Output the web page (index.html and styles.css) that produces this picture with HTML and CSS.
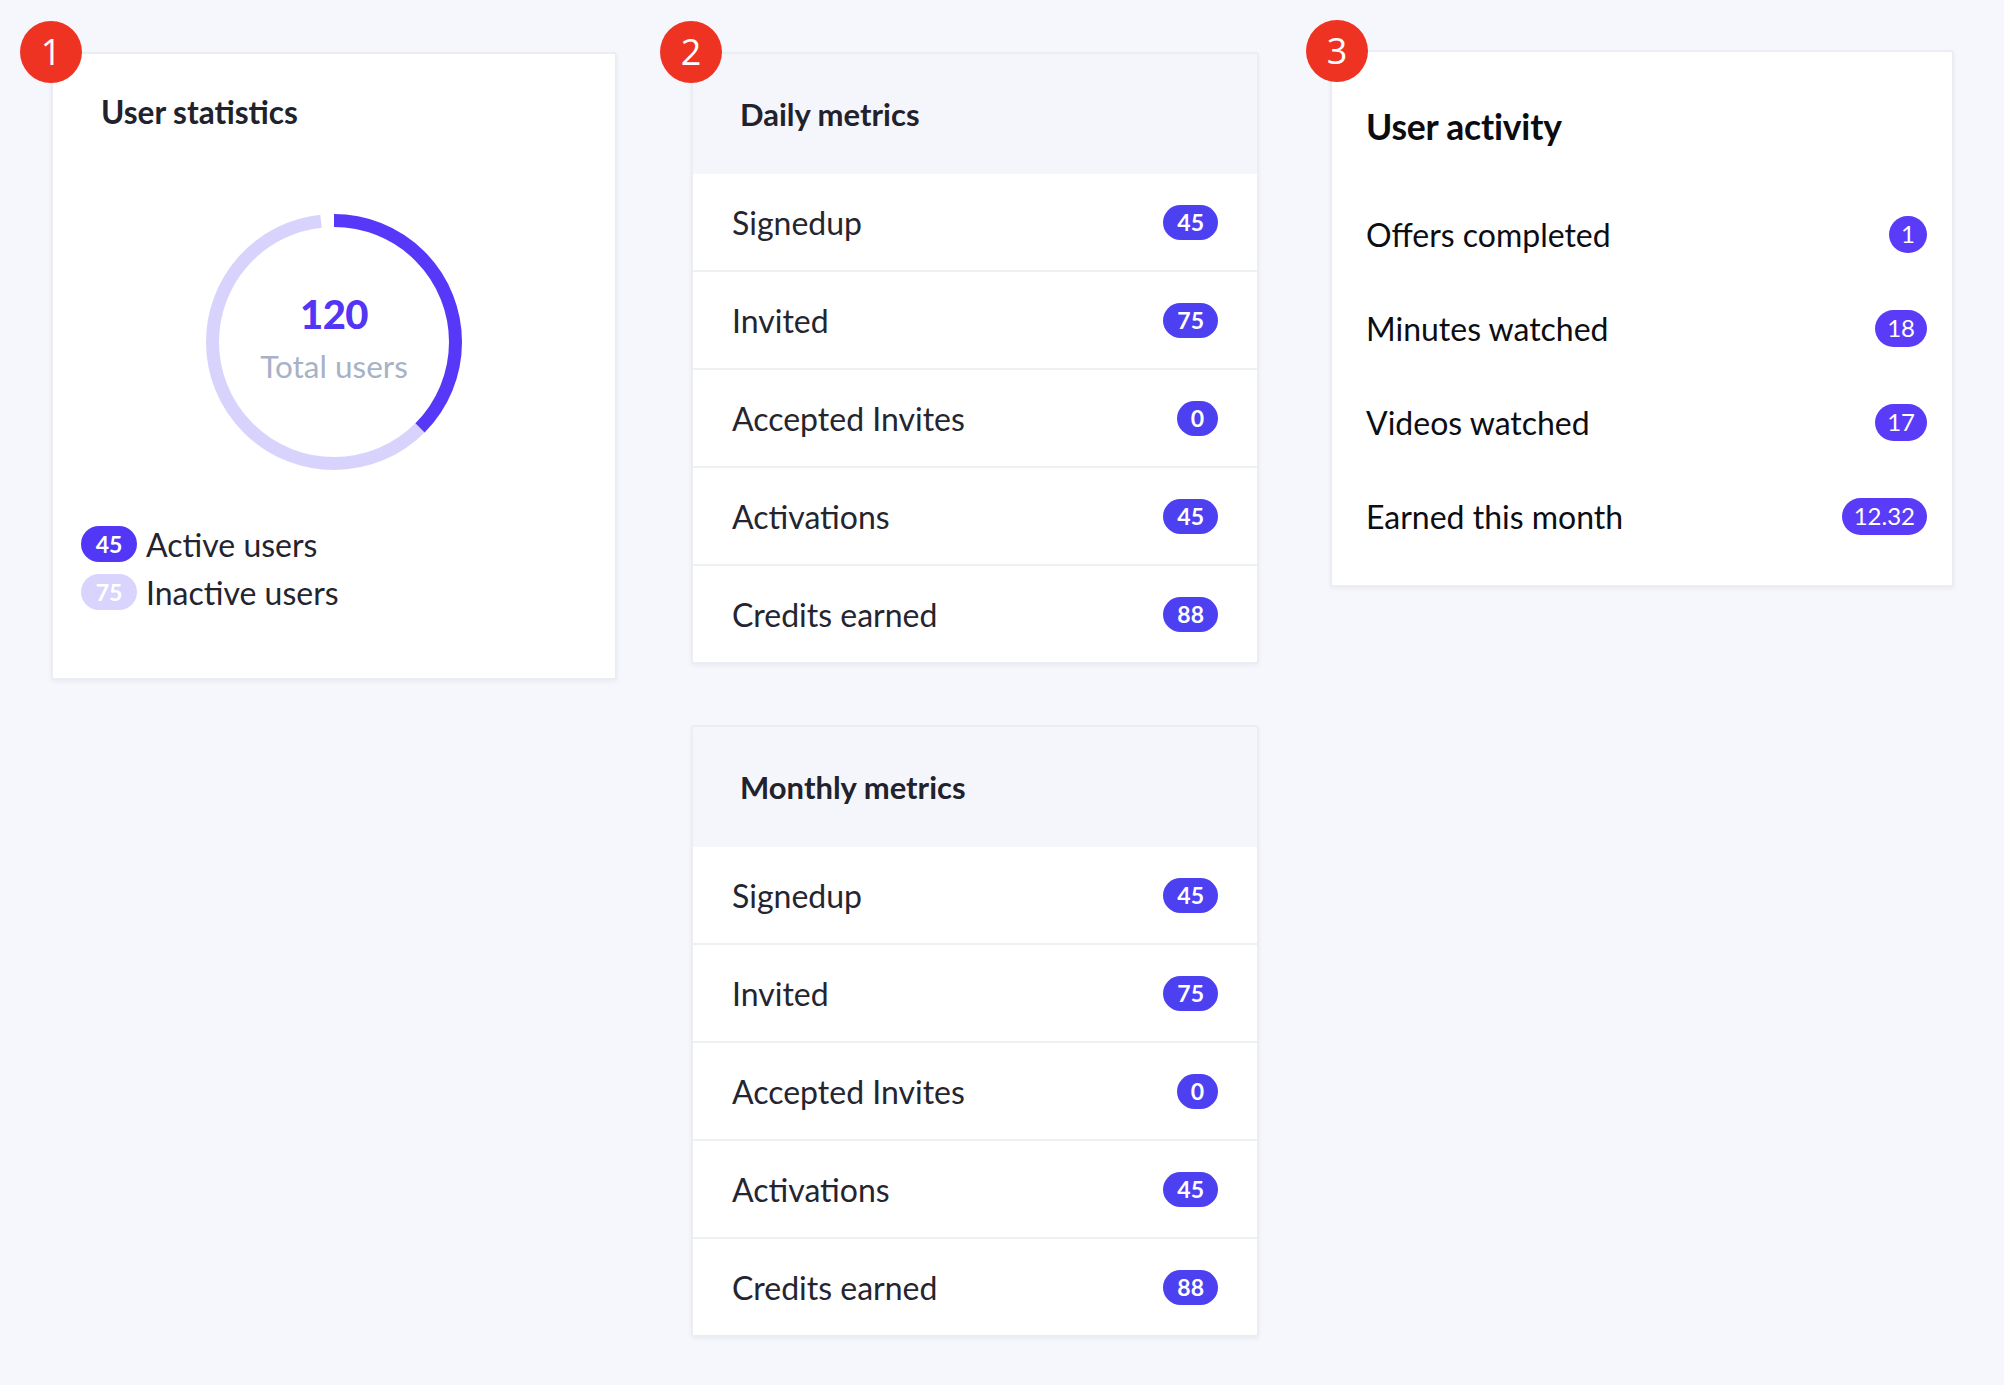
FILE: index.html
```html
<!DOCTYPE html>
<html lang="en">
<head>
<meta charset="utf-8">
<title>Dashboard</title>
<link rel="stylesheet" href="styles.css">
</head>
<body>
<main class="board">
  <section class="col col-left">
    <div class="card stats-card">
      <span class="step">1</span>
      <h2 class="stats-title">User statistics</h2>
      <div class="donut">
        <svg class="donut-svg" width="256" height="256" viewBox="0 0 256 256">
          <circle cx="128" cy="128" r="121.5" fill="none" stroke="#d8d3fd" stroke-width="13" stroke-dasharray="465 800" stroke-dashoffset="-285" transform="rotate(-90 128 128)"/>
          <circle cx="128" cy="128" r="121.5" fill="none" stroke="#5838f8" stroke-width="13" stroke-dasharray="286 800" transform="rotate(-90 128 128)"/>
        </svg>
        <div class="donut-label">
          <span class="donut-num">120</span>
          <span class="donut-sub">Total users</span>
        </div>
      </div>
      <ul class="legend">
        <li class="legend-row"><span class="pill pill-dark">45</span><span>Active users</span></li>
        <li class="legend-row"><span class="pill pill-light">75</span><span>Inactive users</span></li>
      </ul>
    </div>
  </section>

  <section class="col col-mid">
    <div class="card list-card">
      <span class="step">2</span>
      <header class="list-head">Daily metrics</header>
      <ul class="list">
        <li class="list-row"><span>Signedup</span><span class="pill">45</span></li>
        <li class="list-row"><span>Invited</span><span class="pill">75</span></li>
        <li class="list-row"><span>Accepted Invites</span><span class="pill">0</span></li>
        <li class="list-row"><span>Activations</span><span class="pill">45</span></li>
        <li class="list-row"><span>Credits earned</span><span class="pill">88</span></li>
      </ul>
    </div>
    <div class="card list-card">
      <header class="list-head">Monthly metrics</header>
      <ul class="list">
        <li class="list-row"><span>Signedup</span><span class="pill">45</span></li>
        <li class="list-row"><span>Invited</span><span class="pill">75</span></li>
        <li class="list-row"><span>Accepted Invites</span><span class="pill">0</span></li>
        <li class="list-row"><span>Activations</span><span class="pill">45</span></li>
        <li class="list-row"><span>Credits earned</span><span class="pill">88</span></li>
      </ul>
    </div>
  </section>

  <section class="col col-right">
    <div class="card activity-card">
      <span class="step step-right">3</span>
      <h2 class="activity-title">User activity</h2>
      <ul class="activity">
        <li class="activity-row"><span>Offers completed</span><span class="pill pill-act">1</span></li>
        <li class="activity-row"><span>Minutes watched</span><span class="pill pill-act">18</span></li>
        <li class="activity-row"><span>Videos watched</span><span class="pill pill-act">17</span></li>
        <li class="activity-row"><span>Earned this month</span><span class="pill pill-act">12.32</span></li>
      </ul>
    </div>
  </section>
</main>
</body>
</html>
```

FILE: styles.css
```css
* { box-sizing: border-box; }

html, body {
  margin: 0;
  padding: 0;
  background: #f6f7fc;
}

body {
  font-family: Lato, "Open Sans", Arial, sans-serif;
  color: #24242e;
  width: 2004px;
  height: 1385px;
  overflow: hidden;
}

ul { list-style: none; margin: 0; padding: 0; }
h2 { margin: 0; }

.board {
  display: flex;
  align-items: flex-start;
  padding: 50px 0 0 51px;
}

.col { display: flex; flex-direction: column; }
.col-left { width: 566px; margin-top: 2px; }
.col-mid { width: 568px; margin-left: 74px; margin-top: 2px; gap: 61px; }
.col-right { width: 624px; margin-left: 71px; }

.card {
  position: relative;
  background: #ffffff;
  border: 2px solid #ecedf3;
  border-radius: 3px;
  box-shadow: 0 2px 4px rgba(40, 45, 80, 0.05);
}

.step {
  position: absolute;
  left: -33px;
  top: -33px;
  width: 62px;
  height: 62px;
  border-radius: 50%;
  background: #ef3322;
  color: #ffffff;
  font-family: "Open Sans", Arial, sans-serif;
  font-size: 36px;
  font-weight: 400;
  line-height: 62px;
  text-align: center;
  z-index: 2;
}

.step-right { left: -26px; top: -32px; }

/* Pills */
.pill {
  display: inline-flex;
  align-items: center;
  justify-content: center;
  height: 35px;
  min-width: 35px;
  padding: 0 14px;
  border-radius: 18px;
  background: #4d40f1;
  color: #ffffff;
  font-size: 23px;
  font-weight: 700;
  line-height: 1;
}

/* Card 1 */
.stats-card {
  display: flex;
  flex-direction: column;
  padding: 40px 0 68px 28px;
}

.stats-title {
  padding-left: 20px;
  font-size: 31.5px;
  font-weight: 700;
  line-height: 36px;
  color: #22222c;
}

.donut {
  display: grid;
  place-items: center;
  margin: 84px 0 0 -28px;
}

.donut-svg, .donut-label { grid-area: 1 / 1; }

.donut-label {
  display: flex;
  flex-direction: column;
  align-items: center;
  margin-top: -8px;
}

.donut-num {
  font-size: 40px;
  font-weight: 900;
  line-height: 48px;
  color: #5236f4;
  letter-spacing: -0.5px;
}

.donut-sub {
  margin-top: 8px;
  font-size: 31.5px;
  line-height: 40px;
  color: #a7b2c6;
}

.legend {
  margin-top: 56px;
  display: flex;
  flex-direction: column;
  gap: 12px;
}

.legend-row {
  display: flex;
  align-items: center;
  gap: 9px;
  height: 36px;
  font-size: 32px;
  color: #24242e;
}

.legend-row .pill { height: 36px; width: 56px; padding: 0; }
.pill-dark { background: #5238f6; }
.pill-light { background: #d9d4fd; }

/* Metric list cards */
.list-head {
  height: 120px;
  display: flex;
  align-items: center;
  padding: 0 0 0 47px;
  background: #f5f6fb;
  font-size: 31px;
  font-weight: 700;
  color: #22222c;
}

.list-row {
  height: 98px;
  display: flex;
  align-items: center;
  justify-content: space-between;
  padding: 0 39px 0 39px;
  border-top: 2px solid #eff0f4;
  font-size: 32px;
  color: #25252f;
}

.list-row:first-child { border-top: 0; height: 96px; }

/* Card 3 */
.activity-card {
  padding: 55px 25px 22px 34px;
}

.activity-title {
  font-size: 35.5px;
  font-weight: 700;
  line-height: 40px;
  color: #0b0b10;
  letter-spacing: -0.2px;
}

.activity { margin-top: 40px; }

.activity-row {
  height: 94px;
  display: flex;
  align-items: center;
  justify-content: space-between;
  font-size: 32px;
  color: #0d0d12;
}

.pill-act {
  height: 37px;
  min-width: 37px;
  padding: 0 12px;
  border-radius: 19px;
  background: #5a3cf8;
  font-size: 24px;
  font-weight: 400;
}
```
